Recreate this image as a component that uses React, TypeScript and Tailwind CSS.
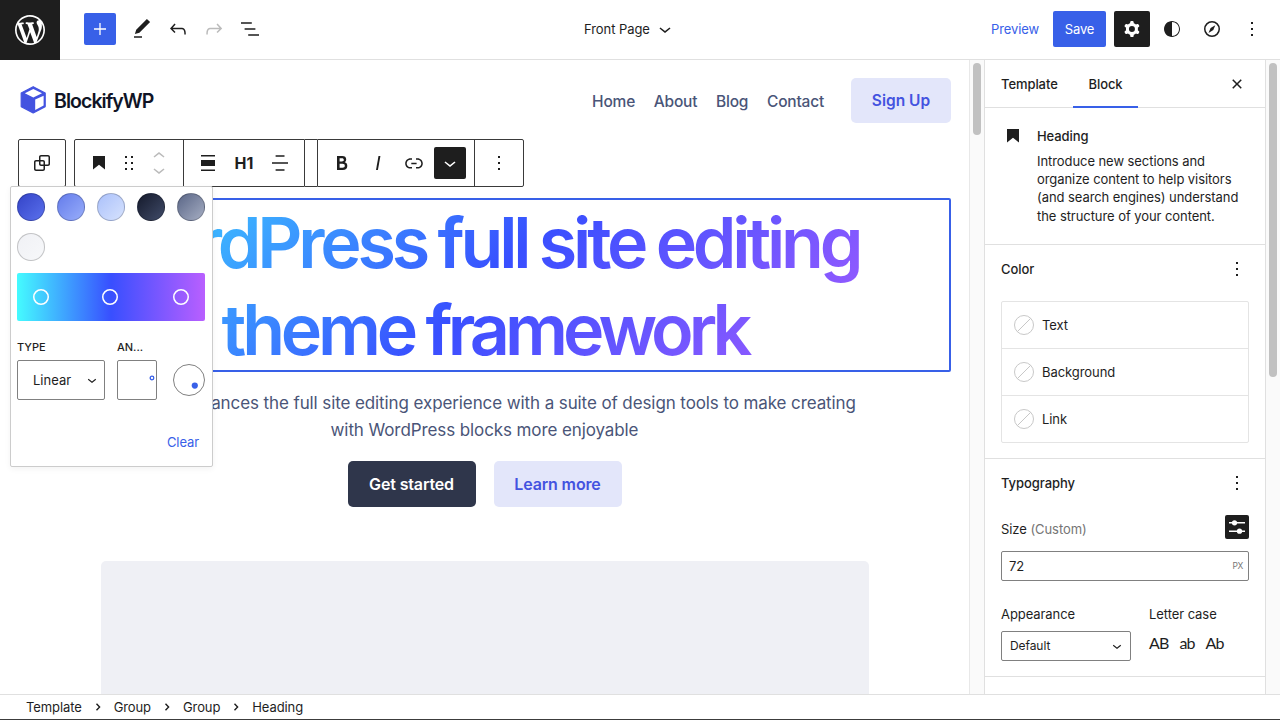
import React from "react";

function Icon({ d, className = "size-6" }: { d: string; className?: string }) {
  return (
    <svg viewBox="0 0 24 24" className={`shrink-0 ${className}`} fill="currentColor" fillRule="evenodd" clipRule="evenodd">
      <path d={d} />
    </svg>
  );
}

const icons = {
  plus: "M18 11.35h-5.35V6h-1.3v5.35H6v1.3h5.35V18h1.3v-5.35H18z",
  edit: "M20.1 5.1L16.9 2 6.2 12.7l-1.3 4.4 4.5-1.3L20.1 5.1zM4 20.8h8v-1.5H4v1.5z",
  undo: "M18.3 11.7c-.6-.6-1.4-.9-2.3-.9H6.7l2.9-3.3-1.1-1-4.5 5L8.5 16l1-1-2.7-2.7H16c.5 0 .9.2 1.3.5 1 1 1 3.4 1 4.5v.3h1.5v-.2c0-1.5 0-4.3-1.5-5.7z",
  redo: "M15.6 6.5l-1.1 1 2.9 3.3H8c-.9 0-1.7.3-2.3.9-1.4 1.5-1.4 4.2-1.4 5.6v.2h1.5v-.3c0-1.1 0-3.5 1-4.5.3-.3.7-.5 1.3-.5h9.2L14.5 15l1.1 1.1 4.6-4.6-4.6-5z",
  list: "M13.8 5.2H3v1.5h10.8V5.2zm-3.6 12v1.5H21v-1.5H10.2zm7.2-6H6.6v1.5h10.8v-1.5z",
  cog: "M10.289 4.836A1 1 0 0111.275 4h1.306a1 1 0 01.987.836l.244 1.466c.787.26 1.503.679 2.108 1.218l1.393-.522a1 1 0 011.216.437l.653 1.13a1 1 0 01-.23 1.273l-1.148.944a6.025 6.025 0 010 2.435l1.149.946a1 1 0 01.23 1.272l-.653 1.13a1 1 0 01-1.216.437l-1.394-.522c-.605.54-1.32.958-2.108 1.218l-.244 1.466a1 1 0 01-.987.836h-1.306a1 1 0 01-.986-.836l-.244-1.466a5.995 5.995 0 01-2.108-1.218l-1.394.522a1 1 0 01-1.217-.436l-.653-1.131a1 1 0 01.23-1.272l1.149-.946a6.026 6.026 0 010-2.435l-1.148-.944a1 1 0 01-.23-1.272l.653-1.131a1 1 0 011.217-.437l1.393.522a5.994 5.994 0 012.108-1.218l.244-1.466zM14.929 12a3 3 0 11-6 0 3 3 0 016 0z",
  styles: "M12 4c-4.4 0-8 3.6-8 8s3.6 8 8 8 8-3.6 8-8-3.6-8-8-8zm0 15V5c3.9 0 7 3.1 7 7s-3.1 7-7 7z",
  more: "M13 19h-2v-2h2v2zm0-6h-2v-2h2v2zm0-6h-2V5h2v2z",
  heading: "M6 5V18.5911L12 13.8473L18 18.5911V5H6Z",
  drag: "M8 7h2V5H8v2zm0 6h2v-2H8v2zm0 6h2v-2H8v2zm6-14v2h2V5h-2zm0 8h2v-2h-2v2zm0 6h2v-2h-2v2z",
  up: "M6.5 12.4L12 8l5.5 4.4-.9 1.2L12 10l-4.5 3.6-1-1.2z",
  down: "M17.5 11.6L12 16l-5.5-4.4.9-1.2L12 14l4.5-3.6 1 1.2z",
  full: "M5 4h14v1.5H5V4zm0 5h14v6H5V9zm0 9.5h14V20H5v-1.5z",
  center: "M16.4 4.2H7.6v1.5h8.9V4.2zM4 11.2v1.5h16v-1.5H4zm3.6 8.6h8.9v-1.5H7.6v1.5z",
  bold: "M14.7 11.3c1-.6 1.5-1.6 1.5-3 0-2.3-1.3-3.4-4-3.4H7v14h5.8c1.4 0 2.5-.3 3.3-1 .8-.7 1.2-1.7 1.2-2.9.1-1.9-.8-3.1-2.6-3.7zm-5.1-4h2.3c.6 0 1.1.1 1.4.4.3.3.5.7.5 1.2s-.2 1-.5 1.2c-.3.3-.8.4-1.4.4H9.6V7.3zm4.6 9c-.4.3-1 .4-1.7.4H9.6v-3.9h2.9c.7 0 1.3.2 1.7.5.4.3.6.8.6 1.5s-.2 1.2-.6 1.5z",
  italic: "M12.5 5L10 19h1.9l2.5-14z",
  link: "M15.6 7.2H14v1.5h1.6c2 0 3.7 1.7 3.7 3.7s-1.7 3.7-3.7 3.7H14v1.5h1.6c2.8 0 5.2-2.3 5.2-5.2 0-2.9-2.3-5.2-5.2-5.2zM4.7 12.4c0-2 1.7-3.7 3.7-3.7H10V7.2H8.4c-2.9 0-5.2 2.3-5.2 5.2 0 2.9 2.3 5.2 5.2 5.2H10v-1.5H8.4c-2 0-3.7-1.7-3.7-3.7zm4.6.9h5.3v-1.5H9.3v1.5z",
  group: "M18 4h-7c-1.1 0-2 .9-2 2v3H6c-1.1 0-2 .9-2 2v7c0 1.1.9 2 2 2h7c1.1 0 2-.9 2-2v-3h3c1.1 0 2-.9 2-2V6c0-1.1-.9-2-2-2zm-4.5 14c0 .3-.2.5-.5.5H6c-.3 0-.5-.2-.5-.5v-7c0-.3.2-.5.5-.5h3V13c0 1.1.9 2 2 2h2.5v3zm0-4.5H11c-.3 0-.5-.2-.5-.5v-2.5H13c.3 0 .5.2.5.5v2.5zm5-.5c0 .3-.2.5-.5.5h-3V11c0-1.1-.9-2-2-2h-2.5V6c0-.3.2-.5.5-.5h7c.3 0 .5.2.5.5v7z",
  close: "M12 13.06l3.712 3.713 1.061-1.06L13.061 12l3.712-3.712-1.06-1.06L12 10.938 8.288 7.227l-1.061 1.06L10.939 12l-3.712 3.712 1.06 1.061L12 13.061z",
};

const wordpressMark =
  "M20 10c0-5.51-4.49-10-10-10C4.48 0 0 4.49 0 10c0 5.52 4.48 10 10 10 5.51 0 10-4.48 10-10zM7.78 15.37L4.37 6.22c.55-.02 1.17-.08 1.17-.08.5-.06.44-1.13-.06-1.11 0 0-1.45.11-2.37.11-.18 0-.37 0-.58-.01C4.12 2.69 6.87 1.11 10 1.11c2.33 0 4.45.87 6.05 2.34-.68-.11-1.65.39-1.65 1.58 0 .74.45 1.36.9 2.1.35.61.55 1.36.55 2.46 0 1.49-1.4 5-1.4 5l-3.03-8.37c.54-.02.82-.17.82-.17.5-.05.44-1.25-.06-1.22 0 0-1.44.12-2.38.12-.87 0-2.33-.12-2.33-.12-.5-.03-.56 1.2-.06 1.22l.92.08 1.26 3.41zM17.41 10c.24-.64.74-1.87.43-4.25.7 1.29 1.05 2.71 1.05 4.25 0 3.29-1.73 6.24-4.4 7.78.97-2.59 1.94-5.2 2.92-7.78zM6.1 18.09C3.12 16.65 1.11 13.53 1.11 10c0-1.3.23-2.48.72-3.59C3.25 10.3 4.67 14.2 6.1 18.09zm4.03-6.63l2.58 6.98c-.86.29-1.76.45-2.71.45-.79 0-1.57-.11-2.29-.33.81-2.38 1.62-4.74 2.42-7.1z";

function TopBar() {
  return (
    <header className="flex h-[60px] shrink-0 items-center border-b border-[#e0e0e0] pb-px">
      <div className="-mb-0.5 flex size-[60px] items-center justify-center self-start bg-[#1e1e1e] text-white">
        <svg viewBox="-2 -2 24 24" className="size-9" fill="currentColor">
          <path d={wordpressMark} />
        </svg>
      </div>
      <div className="ml-6 flex items-center">
        <button className="flex size-8 items-center justify-center rounded-[2px] bg-[#3860e8] text-white">
          <Icon d={icons.plus} />
        </button>
        <div className="ml-3.5 flex gap-3">
          <Icon d={icons.edit} />
          <Icon d={icons.undo} />
          <Icon d={icons.redo} className="size-6 text-[#bbb]" />
          <Icon d={icons.list} />
        </div>
      </div>
      <div className="ml-[322px] flex items-center gap-[3px] text-[13px] tracking-[-0.07px]">
        <span className="pt-0.5">Front Page</span>
        <Icon d={icons.down} />
      </div>
      <div className="ml-auto flex items-center pr-4 text-[13px] tracking-[-0.1px]">
        <span className="pt-0.5 text-[#3860e8]">Preview</span>
        <button className="ml-3.5 h-9 w-[53px] rounded-[2px] bg-[#3860e8] pt-0.5 text-white">Save</button>
        <button className="ml-2 flex size-9 items-center justify-center rounded-[2px] bg-[#1e1e1e] text-white">
          <Icon d={icons.cog} />
        </button>
        <Icon d={icons.styles} className="ml-2.5 size-6" />
        <svg viewBox="0 0 24 24" className="ml-4 size-6" fill="none">
          <circle cx="12" cy="12" r="7.25" stroke="currentColor" strokeWidth="1.5" />
          <path d="M15.3 8.2L13.3 12.9L8.5 15.9L10.6 11.1Z" fill="currentColor" />
        </svg>
        <Icon d={icons.more} className="ml-4 size-6" />
      </div>
    </header>
  );
}

function SiteHeader() {
  return (
    <div className="flex h-[79px] shrink-0 items-center pt-0.5 pr-[18px] pl-5">
      <svg viewBox="0 0 26 28" className="-mt-0.5 h-7 w-[26px]">
        <path d="M13.2 .7L25.2 7V20.6L13.2 27L1.2 20.6V7Z" fill="#4353e0" stroke="#4353e0" strokeWidth="1.2" strokeLinejoin="round" />
        <path d="M13.3 2.9L22 7.2L13.3 11.5L4.8 7.2Z" fill="#fff" />
        <path d="M15.2 13.6L23.6 9.7V19.6L15.2 24Z" fill="#fff" />
      </svg>
      <span className="ml-2 pt-[3px] text-[19.5px] font-semibold tracking-[-0.95px] text-[#101426]">BlockifyWP</span>
      <nav className="ml-auto flex gap-[18.7px] pt-0.5 text-[15.5px] font-medium tracking-[-0.2px] text-[#4a5578]">
        <span>Home</span>
        <span>About</span>
        <span>Blog</span>
        <span>Contact</span>
      </nav>
      <span className="-mt-px ml-[27px] flex h-[45px] w-[100px] items-center justify-center rounded-[5px] bg-[#e3e6fa] pt-px text-[15.5px] font-semibold text-[#4353e0]">
        Sign Up
      </span>
    </div>
  );
}

function BlockToolbar() {
  return (
    <div className="flex h-12 shrink-0 pl-[18px]">
      <div className="flex w-12 items-center justify-center rounded-[2px] border border-[#3a3a3a]">
        <Icon d={icons.group} />
      </div>
      <div className="ml-2 flex w-[231px] rounded-l-[2px] border border-[#3a3a3a]">
        <div className="flex w-[109px] items-center border-r border-[#3a3a3a] pl-3">
          <Icon d={icons.heading} />
          <Icon d={icons.drag} className="ml-1.5 size-6" />
          <div className="ml-1.5 flex flex-col text-[#bbb]">
            <Icon d={icons.up} className="-mb-2.5 size-6" />
            <Icon d={icons.down} />
          </div>
        </div>
        <div className="flex items-center pl-3">
          <Icon d={icons.full} />
          <span className="ml-3 w-6 text-center text-base leading-6 font-bold">H1</span>
          <Icon d={icons.center} className="ml-3 size-6" />
        </div>
      </div>
      <div className="w-3 border-y border-[#3a3a3a]" />
      <div className="flex w-[207px] items-center rounded-r-[2px] border border-[#3a3a3a] pl-3">
        <Icon d={icons.bold} />
        <Icon d={icons.italic} className="ml-3 size-6" />
        <Icon d={icons.link} className="ml-3 size-6" />
        <div className="ml-2 flex size-8 items-center justify-center rounded-[2px] bg-[#1e1e1e] text-white">
          <Icon d={icons.down} />
        </div>
        <div className="ml-2 flex h-full items-center border-l border-[#3a3a3a] pl-3">
          <Icon d={icons.more} />
        </div>
      </div>
    </div>
  );
}

const swatches = [
  "bg-linear-[135deg,#3444c8,#5a70ec]",
  "bg-linear-[135deg,#647ceb,#98adfa]",
  "bg-linear-[135deg,#abc1fb,#d6e2fd]",
  "bg-linear-[135deg,#151a2c,#404b68]",
  "bg-linear-[135deg,#5a6687,#a5adc2]",
  "bg-linear-[135deg,#f0f1f5,#f7f8fa]",
];

function StopHandle({ className = "" }: { className?: string }) {
  return (
    <svg viewBox="0 0 16 16" className={`size-4 ${className}`} fill="none" stroke="#fff" strokeWidth="1.5">
      <circle cx="8" cy="8" r="7.25" />
    </svg>
  );
}

function GradientPopover() {
  return (
    <div className="absolute top-[126px] left-[10px] flex h-[281px] w-[203px] flex-col rounded-[2px] border border-[#ccc] bg-white px-1.5 pt-1.5 shadow-[0_2px_6px_rgba(0,0,0,0.05)]">
      <div className="grid w-[188px] grid-cols-5 gap-x-3 gap-y-3">
        {swatches.map((s) => (
          <span key={s} className={`size-7 rounded-full border border-black/20 ${s}`} />
        ))}
      </div>
      <div className="mt-3 flex h-12 w-[188px] items-center rounded-[2px] bg-linear-[90deg,#45fbff,#384fff_50%,#b95fff] pl-4">
        <StopHandle />
        <StopHandle className="ml-[53px]" />
        <StopHandle className="ml-[55px]" />
      </div>
      <div className="mt-[18px] flex text-[11px] leading-4 font-medium">
        <span className="w-[100px]">TYPE</span>
        <span>AN...</span>
      </div>
      <div className="mt-[5px] flex items-center">
        <div className="flex h-10 w-[88px] items-center justify-between rounded-[2px] border border-[#808080] pr-[3px] pl-[15px] text-[13px]">
          <span className="pt-px">Linear</span>
          <Icon d={icons.down} className="size-[18px]" />
        </div>
        <div className="ml-3 flex h-10 w-10 justify-end rounded-[2px] border border-[#808080] pt-3.5 pr-px">
          <svg viewBox="0 0 6 6" className="size-1.5" fill="none" stroke="#3860e8" strokeWidth="1.3">
            <circle cx="3" cy="3" r="1.8" />
          </svg>
        </div>
        <svg viewBox="0 0 32 32" className="ml-4 size-8" fill="none">
          <circle cx="16" cy="16" r="15.5" stroke="#808080" />
          <circle cx="21.8" cy="21.6" r="3.1" fill="#3860e8" />
        </svg>
      </div>
      <span className="mt-8 mr-[7px] self-end text-[13px] leading-5 tracking-[-0.1px] text-[#3860e8]">Clear</span>
    </div>
  );
}

function Canvas() {
  return (
    <main className="relative flex w-[969px] shrink-0 flex-col overflow-hidden">
      <SiteHeader />
      <BlockToolbar />
      <div className="mt-[11px] mr-[18px] ml-[18px] h-[174px] shrink-0 rounded-[2px] border-2 border-[#3860e8]">
        <h1 className="bg-linear-[135deg,#3ff8ff,#384fff_50%,#b95fff] bg-clip-text text-center text-[70px] leading-[86.5px] font-semibold tracking-[-4.2px] whitespace-nowrap text-transparent [word-spacing:-2px]">
          <span className="mr-4">WordPress full site editing</span>
          <br />
          theme <span className="tracking-[-5px]">framework</span>
        </h1>
      </div>
      <p className="mt-[18px] shrink-0 text-center text-[17px] leading-[27px] tracking-[-0.1px] whitespace-nowrap text-[#4a5578]">
        Blockify enhances the full site editing experience with a suite of design tools to make creating
        <br />
        with WordPress blocks more enjoyable
      </p>
      <div className="mt-[17px] flex shrink-0 justify-center gap-[18px] text-base font-semibold tracking-[-0.15px]">
        <span className="flex h-[46px] w-32 items-center justify-center rounded-[5px] bg-[#2f364b] text-white">Get started</span>
        <span className="flex h-[46px] w-32 items-center justify-center rounded-[5px] bg-[#e3e6fa] text-[#4353e0]">Learn more</span>
      </div>
      <div className="mt-[54px] ml-[101px] h-[140px] w-[768px] shrink-0 rounded-t-[5px] bg-[#eff0f5]" />
      <GradientPopover />
    </main>
  );
}

function PanelTitle({ children }: { children: React.ReactNode }) {
  return (
    <div className="flex h-12 items-center justify-between pr-4 pl-4 text-[13px] font-medium">
      <span className="pt-0.5">{children}</span>
      <Icon d={icons.more} />
    </div>
  );
}

function Sidebar() {
  return (
    <aside className="flex w-[282px] shrink-0 flex-col overflow-hidden border-x border-[#e0e0e0] text-[13px] tracking-[-0.07px]">
      <div className="flex h-12 shrink-0 items-center border-b border-[#e0e0e0] font-medium">
        <span className="w-[88px] pt-0.5 pl-4">Template</span>
        <span className="flex h-12 w-[65px] items-center justify-center border-b-2 border-[#3860e8] pt-[5px]">Block</span>
        <Icon d={icons.close} className="mr-4 ml-auto size-6" />
      </div>
      <div className="flex h-[137px] shrink-0 border-b border-[#e0e0e0] pt-4 pl-4">
        <Icon d={icons.heading} />
        <div className="ml-3">
          <div className="leading-6 font-medium">Heading</div>
          <p className="mt-1 leading-[18.2px] whitespace-nowrap">
            Introduce new sections and
            <br />
            organize content to help visitors
            <br />
            (and search engines) understand
            <br />
            the structure of your content.
          </p>
        </div>
      </div>
      <div className="h-[214px] shrink-0 border-b border-[#e0e0e0]">
        <PanelTitle>Color</PanelTitle>
        <div className="mx-4 mt-2 rounded-[2px] border border-[#e4e4e4]">
          {["Text", "Background", "Link"].map((label) => (
            <div key={label} className="flex h-[47px] items-center gap-2 border-b border-[#e4e4e4] pl-3 last:h-[46px] last:border-b-0">
              <svg viewBox="0 0 20 20" className="size-5" fill="none" stroke="#c8c8c8">
                <circle cx="10" cy="10" r="9.5" />
                <path d="M3.3 16.7L16.7 3.3" />
              </svg>
              <span className="pt-0.5">{label}</span>
            </div>
          ))}
        </div>
      </div>
      <div className="h-[218px] shrink-0 border-b border-[#e0e0e0]">
        <PanelTitle>Typography</PanelTitle>
        <div className="mt-2 flex h-6 items-center justify-between px-4">
          <span className="pt-1.5">
            Size <span className="text-[#757575]">(Custom)</span>
          </span>
          <svg viewBox="0 0 24 24" className="size-6" stroke="#fff" strokeWidth="1.4">
            <rect width="24" height="24" rx="2" fill="#1e1e1e" stroke="none" />
            <path d="M4 7.8H20M4 16.2H20" />
            <circle cx="9.5" cy="7.8" r="2.6" fill="#fff" stroke="none" />
            <circle cx="14.5" cy="16.2" r="2.6" fill="#fff" stroke="none" />
          </svg>
        </div>
        <div className="mx-4 mt-3 flex h-[30px] items-center justify-between rounded-[2px] border border-[#808080] pr-[5px] pl-[7px]">
          <span className="pt-0.5">72</span>
          <span className="text-[8.5px] tracking-[-0.4px] text-[#757575]">PX</span>
        </div>
        <div className="mt-[23px] flex pl-4">
          <div className="w-[148px]">
            <div className="leading-5">Appearance</div>
            <div className="mt-[7px] flex h-[30px] w-[130px] items-center justify-between rounded-[2px] border border-[#808080] pr-1 pl-2 text-[12px]">
              Default
              <Icon d={icons.down} className="size-[18px]" />
            </div>
          </div>
          <div>
            <div className="leading-5">Letter case</div>
            <div className="mt-[9px] flex gap-[11px] font-['Lato','Noto_Sans',sans-serif] text-base leading-5 tracking-[-0.9px]">
              <span>AB</span>
              <span>ab</span>
              <span>Ab</span>
            </div>
          </div>
        </div>
      </div>
    </aside>
  );
}

function Breadcrumbs() {
  const items = ["Template", "Group", "Group", "Heading"];
  return (
    <footer className="flex h-[26px] shrink-0 items-center border-t border-b border-t-[#e0e0e0] border-b-[#3c3c3c] pl-[26px] text-[13px] tracking-[-0.1px]">
      {items.map((item, i) => (
        <React.Fragment key={i}>
          {i > 0 && (
            <svg viewBox="0 0 8 8" className="mx-3 size-2" fill="none" stroke="currentColor" strokeWidth="1.4">
              <path d="M2.5 .8L5.6 4L2.5 7.2" />
            </svg>
          )}
          <span className="pt-0.5">{item}</span>
        </React.Fragment>
      ))}
    </footer>
  );
}

export default function App() {
  return (
    <div className="flex h-[720px] w-[1280px] flex-col overflow-hidden bg-white font-['Inter',sans-serif] text-[#1e1e1e]">
      <TopBar />
      <div className="flex min-h-0 flex-1">
        <Canvas />
        <div className="flex w-[15px] shrink-0 justify-center border-l border-[#e8e8e8] bg-[#fafafa] pt-[3px]">
          <div className="h-[72px] w-2 rounded-full bg-[#c1c1c1]" />
        </div>
        <Sidebar />
        <div className="flex w-[14px] shrink-0 justify-center bg-[#fafafa] pt-[3px]">
          <div className="h-[314px] w-2 rounded-full bg-[#c1c1c1]" />
        </div>
      </div>
      <Breadcrumbs />
    </div>
  );
}
